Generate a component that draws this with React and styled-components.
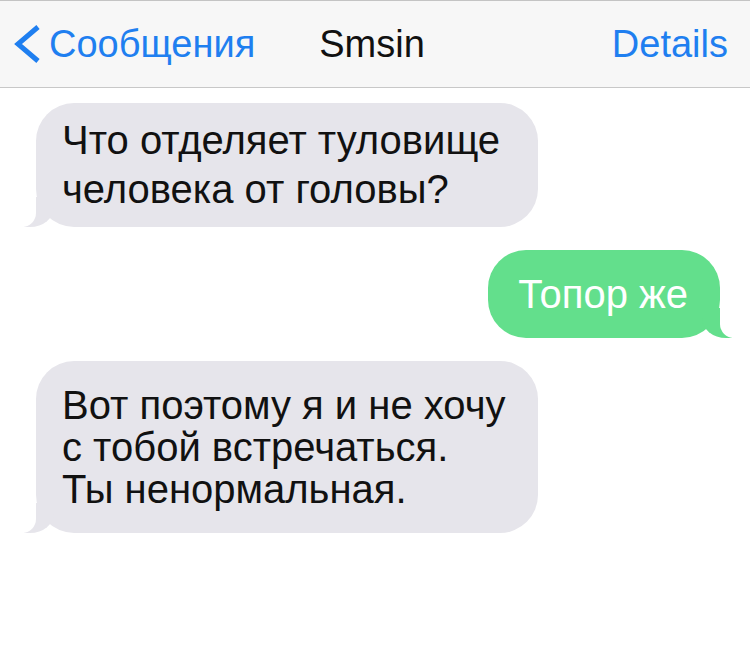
import React from 'react';
import styled, { createGlobalStyle } from 'styled-components';

const GlobalStyle = createGlobalStyle`
  html, body {
    margin: 0;
    padding: 0;
    background: #ffffff;
  }
  body {
    font-family: "Liberation Sans", Arial, Helvetica, sans-serif;
  }
`;

const messages = [
  {
    id: 1,
    from: 'them',
    lines: ['Что отделяет туловище', 'человека от головы?'],
    leading: 49,
    padY: 13,
  },
  { id: 2, from: 'me', lines: ['Топор же'], leading: 44, padY: 22 },
  {
    id: 3,
    from: 'them',
    lines: ['Вот поэтому я и не хочу', 'с тобой встречаться.', 'Ты ненормальная.'],
    leading: 42,
    padY: 23,
  },
];

export default function App() {
  return (
    <Screen>
      <GlobalStyle />
      <NavBar>
        <BackLink>
          <svg width="30" height="40" viewBox="0 0 30 40">
            <polyline
              points="25,3 5,20 25,37"
              fill="none"
              stroke="#1f7ff0"
              strokeWidth="5"
              strokeLinejoin="miter"
            />
          </svg>
          <span>Сообщения</span>
        </BackLink>
        <Title>Smsin</Title>
        <Action>Details</Action>
      </NavBar>
      <Thread>
        {messages.map((m) => (
          <Row key={m.id} $mine={m.from === 'me'}>
            <Bubble $mine={m.from === 'me'} $leading={m.leading} $padY={m.padY}>
              {m.lines.map((line, i) => (
                <Line key={i}>{line}</Line>
              ))}
            </Bubble>
          </Row>
        ))}
      </Thread>
    </Screen>
  );
}

const Screen = styled.div`
  width: 750px;
  min-height: 672px;
  background: #ffffff;
  overflow: hidden;
`;

const NavBar = styled.header`
  display: flex;
  align-items: center;
  height: 86px;
  padding: 0 22px 0 13px;
  background: #f7f7f7;
  border-top: 1px solid #c4c4c4;
  border-bottom: 1px solid #c8c8c8;
  font-size: 38px;
`;

const BackLink = styled.div`
  display: flex;
  align-items: center;
  gap: 6px;
  color: #1f7ff0;

  svg {
    display: block;
  }
`;

const Title = styled.div`
  margin-left: 64px;
  color: #111111;
`;

const Action = styled.div`
  margin-left: auto;
  color: #1f7ff0;
`;

const Thread = styled.main`
  display: flex;
  flex-direction: column;
  gap: 23px;
  padding: 15px 30px 0 36px;
`;

const Row = styled.div`
  display: flex;
  justify-content: ${(p) => (p.$mine ? 'flex-end' : 'flex-start')};
`;

const Bubble = styled.div`
  position: relative;
  box-sizing: border-box;
  width: ${(p) => (p.$mine ? 'auto' : '502px')};
  padding: ${(p) => (p.$mine ? `${p.$padY}px 32px 0 30px` : `${p.$padY}px 26px`)};
  padding-bottom: ${(p) => p.$padY}px;
  border-radius: 38px;
  background: ${(p) => (p.$mine ? '#63df8c' : '#e6e5eb')};
  color: ${(p) => (p.$mine ? '#ffffff' : '#111111')};
  font-size: 40px;
  line-height: ${(p) => p.$leading}px;

  &::before {
    content: '';
    position: absolute;
    bottom: 0;
    ${(p) => (p.$mine ? 'right: -12px;' : 'left: -12px;')}
    width: 30px;
    height: 30px;
    background: inherit;
    ${(p) =>
      p.$mine
        ? 'border-bottom-left-radius: 24px 20px;'
        : 'border-bottom-right-radius: 24px 20px;'}
  }

  &::after {
    content: '';
    position: absolute;
    bottom: 0;
    ${(p) => (p.$mine ? 'right: -36px;' : 'left: -36px;')}
    width: 36px;
    height: 30px;
    background: #ffffff;
    ${(p) =>
      p.$mine
        ? 'border-bottom-left-radius: 14px;'
        : 'border-bottom-right-radius: 14px;'}
  }
`;

const Line = styled.div`
  white-space: nowrap;
`;
